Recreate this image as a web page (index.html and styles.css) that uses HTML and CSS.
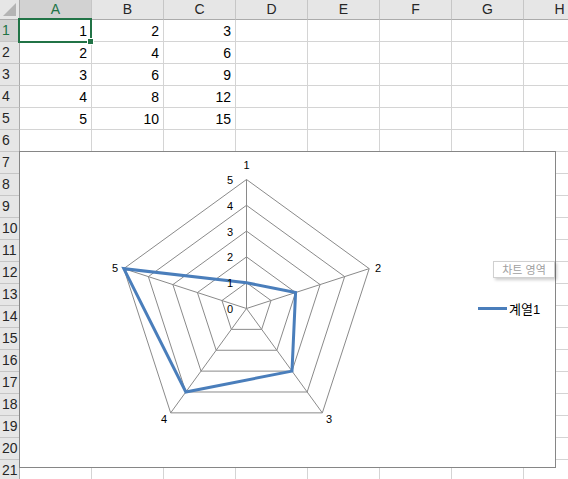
FILE: index.html
```html
<!DOCTYPE html>
<html lang="ko">
<head>
<meta charset="utf-8">
<link rel="stylesheet" href="styles.css">
</head>
<body>
<div class="sheet">
  <div class="ch corner"></div><div class="ch sel">A</div><div class="ch">B</div><div class="ch">C</div><div class="ch">D</div><div class="ch">E</div><div class="ch">F</div><div class="ch">G</div><div class="ch">H</div>
  <div class="rh sel">1</div><div class="c">1</div><div class="c">2</div><div class="c">3</div><div class="c"></div><div class="c"></div><div class="c"></div><div class="c"></div><div class="c"></div>
  <div class="rh">2</div><div class="c">2</div><div class="c">4</div><div class="c">6</div><div class="c"></div><div class="c"></div><div class="c"></div><div class="c"></div><div class="c"></div>
  <div class="rh">3</div><div class="c">3</div><div class="c">6</div><div class="c">9</div><div class="c"></div><div class="c"></div><div class="c"></div><div class="c"></div><div class="c"></div>
  <div class="rh">4</div><div class="c">4</div><div class="c">8</div><div class="c">12</div><div class="c"></div><div class="c"></div><div class="c"></div><div class="c"></div><div class="c"></div>
  <div class="rh">5</div><div class="c">5</div><div class="c">10</div><div class="c">15</div><div class="c"></div><div class="c"></div><div class="c"></div><div class="c"></div><div class="c"></div>
  <div class="rh">6</div><div class="c"></div><div class="c"></div><div class="c"></div><div class="c"></div><div class="c"></div><div class="c"></div><div class="c"></div><div class="c"></div>
  <div class="rh">7</div><div class="c"></div><div class="c"></div><div class="c"></div><div class="c"></div><div class="c"></div><div class="c"></div><div class="c"></div><div class="c"></div>
  <div class="rh">8</div><div class="c"></div><div class="c"></div><div class="c"></div><div class="c"></div><div class="c"></div><div class="c"></div><div class="c"></div><div class="c"></div>
  <div class="rh">9</div><div class="c"></div><div class="c"></div><div class="c"></div><div class="c"></div><div class="c"></div><div class="c"></div><div class="c"></div><div class="c"></div>
  <div class="rh">10</div><div class="c"></div><div class="c"></div><div class="c"></div><div class="c"></div><div class="c"></div><div class="c"></div><div class="c"></div><div class="c"></div>
  <div class="rh">11</div><div class="c"></div><div class="c"></div><div class="c"></div><div class="c"></div><div class="c"></div><div class="c"></div><div class="c"></div><div class="c"></div>
  <div class="rh">12</div><div class="c"></div><div class="c"></div><div class="c"></div><div class="c"></div><div class="c"></div><div class="c"></div><div class="c"></div><div class="c"></div>
  <div class="rh">13</div><div class="c"></div><div class="c"></div><div class="c"></div><div class="c"></div><div class="c"></div><div class="c"></div><div class="c"></div><div class="c"></div>
  <div class="rh">14</div><div class="c"></div><div class="c"></div><div class="c"></div><div class="c"></div><div class="c"></div><div class="c"></div><div class="c"></div><div class="c"></div>
  <div class="rh">15</div><div class="c"></div><div class="c"></div><div class="c"></div><div class="c"></div><div class="c"></div><div class="c"></div><div class="c"></div><div class="c"></div>
  <div class="rh">16</div><div class="c"></div><div class="c"></div><div class="c"></div><div class="c"></div><div class="c"></div><div class="c"></div><div class="c"></div><div class="c"></div>
  <div class="rh">17</div><div class="c"></div><div class="c"></div><div class="c"></div><div class="c"></div><div class="c"></div><div class="c"></div><div class="c"></div><div class="c"></div>
  <div class="rh">18</div><div class="c"></div><div class="c"></div><div class="c"></div><div class="c"></div><div class="c"></div><div class="c"></div><div class="c"></div><div class="c"></div>
  <div class="rh">19</div><div class="c"></div><div class="c"></div><div class="c"></div><div class="c"></div><div class="c"></div><div class="c"></div><div class="c"></div><div class="c"></div>
  <div class="rh">20</div><div class="c"></div><div class="c"></div><div class="c"></div><div class="c"></div><div class="c"></div><div class="c"></div><div class="c"></div><div class="c"></div>
  <div class="rh">21</div><div class="c"></div><div class="c"></div><div class="c"></div><div class="c"></div><div class="c"></div><div class="c"></div><div class="c"></div><div class="c"></div>
</div>

<div class="selection"><span class="handle"></span></div>

<div class="chart">
  <svg class="plot" width="535" height="315" viewBox="20 152 535 315">
    <g class="grid">
      <polygon points="246.5,282.7 271.04,300.53 261.66,329.37 231.34,329.37 221.96,300.53"/>
      <polygon points="246.5,256.9 295.58,292.55 276.83,350.25 216.17,350.25 197.42,292.55"/>
      <polygon points="246.5,231.1 320.11,284.58 291.99,371.12 201.01,371.12 172.89,284.58"/>
      <polygon points="246.5,205.3 344.65,276.61 307.16,391.99 185.84,391.99 148.35,276.61"/>
      <polygon points="246.5,179.5 369.19,268.64 322.33,412.86 170.67,412.86 123.81,268.64"/>
      <line x1="246.5" y1="308.5" x2="246.5" y2="179.5"/>
      <line x1="246.5" y1="308.5" x2="369.19" y2="268.64"/>
      <line x1="246.5" y1="308.5" x2="322.33" y2="412.86"/>
      <line x1="246.5" y1="308.5" x2="170.67" y2="412.86"/>
      <line x1="246.5" y1="308.5" x2="123.81" y2="268.64"/>
    </g>
    <polygon class="series" points="246.5,282.7 295.58,292.55 291.99,371.12 185.84,391.99 123.81,268.64"/>
    <g class="lbl">
      <text x="246.5" y="169" text-anchor="middle">1</text>
      <text x="375" y="272">2</text>
      <text x="326" y="423">3</text>
      <text x="167" y="423" text-anchor="end">4</text>
      <text x="118" y="272" text-anchor="end">5</text>
      <text x="233" y="184" text-anchor="end">5</text>
      <text x="233" y="209.8" text-anchor="end">4</text>
      <text x="233" y="235.6" text-anchor="end">3</text>
      <text x="233" y="261.4" text-anchor="end">2</text>
      <text x="233" y="287.2" text-anchor="end">1</text>
      <text x="233" y="313" text-anchor="end">0</text>
    </g>
    <line class="legend-line" x1="478" y1="308.5" x2="507" y2="308.5"/>
    <text class="legend-text" x="509" y="314">계열1</text>
  </svg>
</div>

<div class="tip">차트 영역</div>
</body>
</html>
```
FILE: styles.css
```css
html, body {
  margin: 0;
  padding: 0;
  background: #ffffff;
  overflow: hidden;
}
body {
  position: relative;
  width: 568px;
  height: 479px;
  font-family: "Liberation Sans", Arial, sans-serif;
  font-size: 14px;
  color: #000;
}
.sheet {
  display: grid;
  grid-template-columns: 20px repeat(8, 72px);
  grid-template-rows: 20px;
  grid-auto-rows: 22px;
  width: 596px;
}
.sheet > div {
  box-sizing: border-box;
}
.ch {
  background: #e6e6e6;
  border-right: 1px solid #c6c6c6;
  border-bottom: 1px solid #ababab;
  text-align: center;
  line-height: 19px;
  color: #262626;
}
.ch.sel {
  background: #d2d2d2;
  color: #217346;
}
.corner {
  position: relative;
  border-right: 1px solid #ababab;
}
.corner::after {
  content: "";
  position: absolute;
  right: 3px;
  bottom: 3px;
  border-left: 13px solid transparent;
  border-bottom: 13px solid #b4b4b4;
}
.rh {
  background: #e6e6e6;
  border-right: 1px solid #ababab;
  border-bottom: 1px solid #c6c6c6;
  padding-left: 2px;
  line-height: 21px;
  color: #262626;
  white-space: nowrap;
}
.rh.sel {
  background: #d2d2d2;
  color: #217346;
}
.c {
  border-right: 1px solid #d4d4d4;
  border-bottom: 1px solid #d4d4d4;
  text-align: right;
  padding: 1px 4px 0 0;
  line-height: 20px;
}
.selection {
  position: absolute;
  left: 18px;
  top: 18px;
  width: 74px;
  height: 25px;
  box-sizing: border-box;
  border: 2px solid #217346;
}
.handle {
  position: absolute;
  right: -4px;
  bottom: -4px;
  width: 5px;
  height: 5px;
  background: #217346;
  border: 1px solid #ffffff;
}
.chart {
  position: absolute;
  left: 19px;
  top: 151px;
  width: 537px;
  height: 317px;
  box-sizing: border-box;
  border: 1px solid #868686;
  background: #ffffff;
}
.plot {
  display: block;
}
.grid polygon, .grid line {
  fill: none;
  stroke: #8a8a8a;
  stroke-width: 1;
}
.series {
  fill: none;
  stroke: #4a7ebb;
  stroke-width: 3;
  stroke-linejoin: miter;
}
.lbl text {
  font-family: "Liberation Sans", Arial, sans-serif;
  font-size: 11px;
  fill: #000;
}
.legend-line {
  stroke: #4a7ebb;
  stroke-width: 3;
}
.legend-text {
  font-family: "Liberation Sans", "Noto Sans CJK KR", sans-serif;
  font-size: 13px;
  fill: #000;
}
.tip {
  position: absolute;
  left: 493px;
  top: 261px;
  width: 62px;
  height: 17px;
  box-sizing: border-box;
  background: #ffffff;
  border: 1px solid #d0d0d0;
  box-shadow: 2px 2px 3px rgba(0, 0, 0, 0.2);
  font-family: "Noto Sans CJK KR", sans-serif;
  font-size: 11px;
  line-height: 15px;
  text-align: center;
  color: #a0a0a0;
}
```
